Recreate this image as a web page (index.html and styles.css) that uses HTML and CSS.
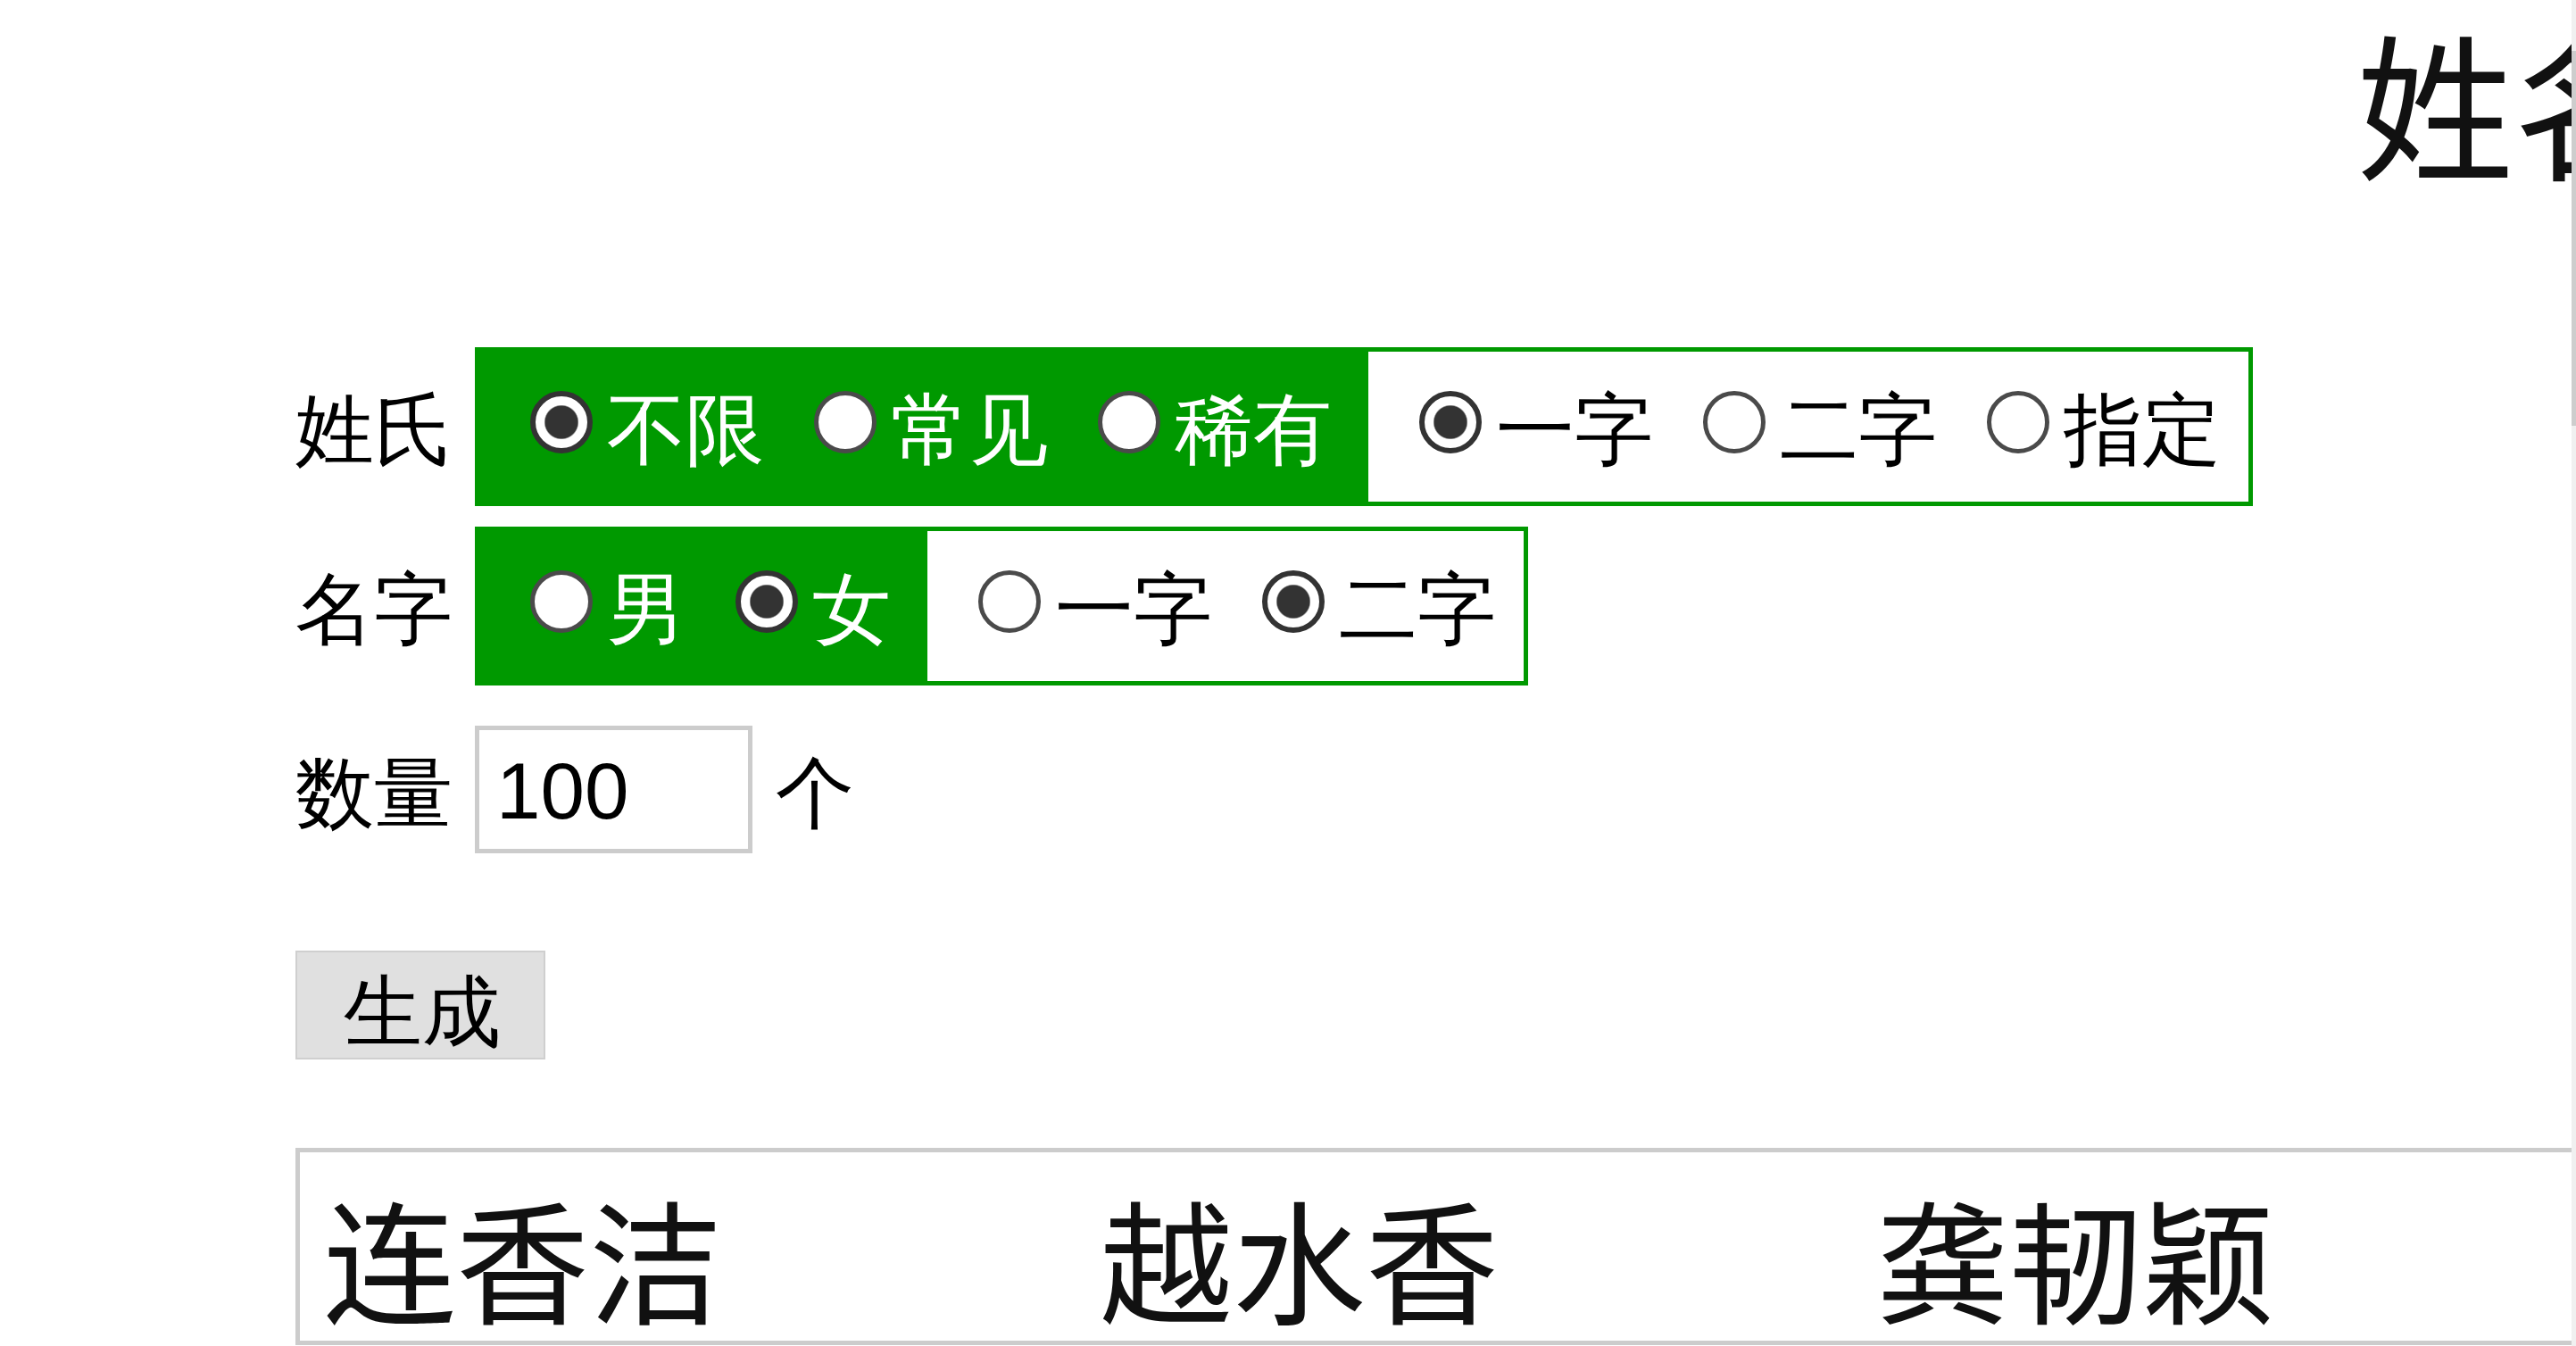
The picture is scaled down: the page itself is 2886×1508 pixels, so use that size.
FILE: index.html
```html
<!DOCTYPE html>
<html lang="zh">
<head>
<meta charset="utf-8">
<title>姓名生成器</title>
<link rel="stylesheet" href="styles.css">
</head>
<body>
<h1 class="title">姓名生成器</h1>
<div class="main">
  <form class="form">
    <div class="row">
      <span class="label">姓氏</span>
      <div class="options">
        <div class="group group-green">
          <label class="opt"><input class="radio" type="radio" name="s1" checked><span class="opt-text">不限</span></label>
          <label class="opt"><input class="radio" type="radio" name="s1"><span class="opt-text">常见</span></label>
          <label class="opt"><input class="radio" type="radio" name="s1"><span class="opt-text">稀有</span></label>
        </div>
        <div class="group group-white">
          <label class="opt"><input class="radio" type="radio" name="s2" checked><span class="opt-text">一字</span></label>
          <label class="opt"><input class="radio" type="radio" name="s2"><span class="opt-text">二字</span></label>
          <label class="opt"><input class="radio" type="radio" name="s2"><span class="opt-text">指定</span></label>
        </div>
      </div>
    </div>
    <div class="row row-2">
      <span class="label">名字</span>
      <div class="options">
        <div class="group group-green">
          <label class="opt"><input class="radio" type="radio" name="g1"><span class="opt-text">男</span></label>
          <label class="opt"><input class="radio" type="radio" name="g1" checked><span class="opt-text">女</span></label>
        </div>
        <div class="group group-white">
          <label class="opt"><input class="radio" type="radio" name="g2"><span class="opt-text">一字</span></label>
          <label class="opt"><input class="radio" type="radio" name="g2" checked><span class="opt-text">二字</span></label>
        </div>
      </div>
    </div>
    <div class="row row-3">
      <span class="label">数量</span>
      <input class="count" type="text" value="100">
      <span class="unit">个</span>
    </div>
    <button class="btn" type="button">生成</button>
  </form>
  <div class="results">
    <span class="name">连香洁</span>
    <span class="name">越水香</span>
    <span class="name">龚韧颖</span>
  </div>
</div>
<div class="scrollbar"><div class="thumb"></div></div>
</body>
</html>
```

FILE: styles.css
```css
html {
  overflow: hidden;
}
body {
  margin: 0;
  font-family: "Liberation Serif", serif;
  color: #000;
  background: #fff;
}
.title {
  margin: 0;
  padding: 25px 0 0 2640px;
  font: 400 176px/1 "Noto Sans CJK SC", sans-serif;
  color: #111;
  white-space: nowrap;
}
.main {
  padding-left: 331px;
  margin-top: 188px;
}
.form {
  margin: 0;
}
.row {
  display: flex;
  align-items: center;
  gap: 25px;
}
.row-2 {
  margin-top: 23px;
}
.row-3 {
  margin-top: 45px;
}
.label {
  font-size: 88px;
  line-height: 1;
  width: 176px;
  flex: none;
  padding-top: 10px;
}
.options {
  display: flex;
  border: 5px solid #009900;
  background: #009900;
}
.group {
  display: flex;
  align-items: center;
  height: 168px;
  padding: 0 41px 0 57px;
  gap: 56px;
}
.group-white {
  background: #fff;
  padding-right: 31px;
}
.opt {
  display: flex;
  align-items: center;
  gap: 16px;
  font-size: 88px;
  line-height: 1;
}
.opt-text {
  padding-top: 10px;
}
.group-green .opt {
  color: #fff;
}
.radio {
  appearance: none;
  -webkit-appearance: none;
  margin: 0 0 10px 0;
  width: 70px;
  height: 70px;
  box-sizing: border-box;
  border-radius: 50%;
  border: 5px solid #4a4a4a;
  background: #fff;
  flex: none;
}
.radio:checked {
  border: 6px solid #333;
  background: radial-gradient(circle, #333 0 18px, #fff 19.5px);
}
.count {
  width: 311px;
  height: 143px;
  box-sizing: border-box;
  border: 5px solid #ccc;
  padding: 4px 0 0 19px;
  margin: 0;
  font: 89px "Liberation Sans", sans-serif;
  color: #000;
  outline: none;
}
.unit {
  font-size: 88px;
  line-height: 1;
  margin-left: 1px;
  padding-top: 10px;
}
.btn {
  display: block;
  margin-top: 109px;
  width: 280px;
  height: 122px;
  padding: 18px 0 0 4px;
  background: #e0e0e0;
  border: 2px solid #cfcfcf;
  font: 88px/1 "Liberation Serif", serif;
  color: #000;
}
.results {
  margin-top: 99px;
  width: 2700px;
  border: 5px solid #ccc;
  padding: 42px 0 20px 26px;
  display: grid;
  grid-template-columns: repeat(3, 870px);
}
.name {
  font: 400 149px/1 "Noto Sans CJK SC", sans-serif;
  color: #111;
}
.scrollbar {
  position: fixed;
  top: 0;
  right: 0;
  width: 5px;
  height: 100%;
  background: #f0f0f0;
}
.thumb {
  margin-top: 57px;
  height: 420px;
  background: #cdcdcd;
}
```
